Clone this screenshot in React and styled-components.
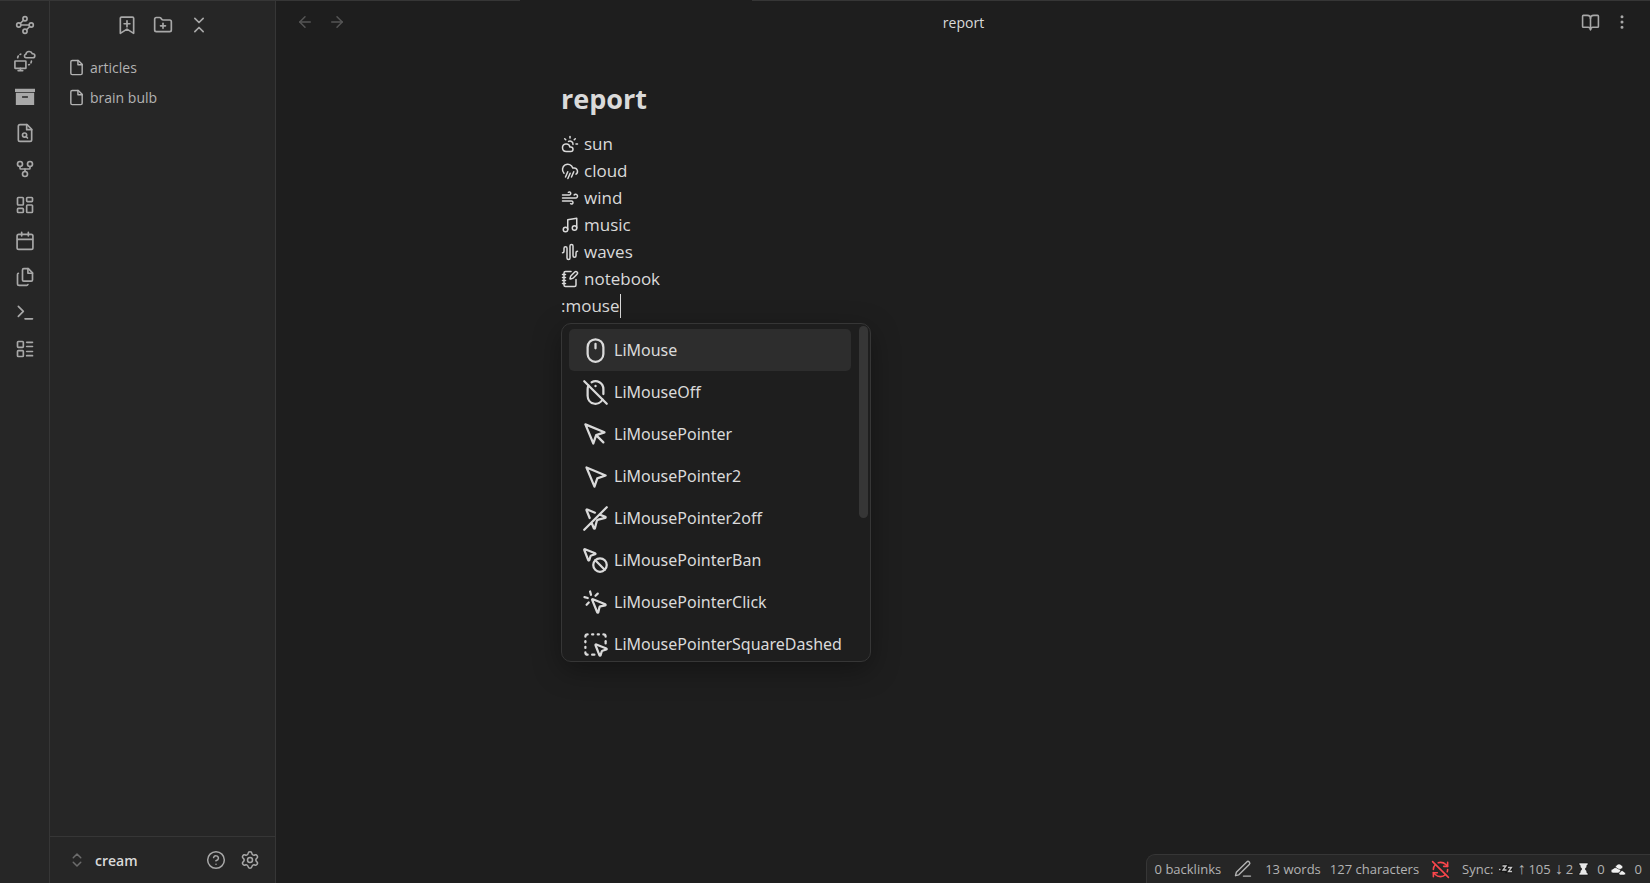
import React from "react";
import styled, { createGlobalStyle } from "styled-components";
import {
  Waypoints, GitFork, LayoutDashboard, LayoutList,
  FolderPlus, ChevronsDownUp, ChevronsUpDown, CircleHelp, Settings,
  ArrowLeft, ArrowRight, BookOpen, EllipsisVertical, CloudSun, CloudRainWind,
  Wind, Music, AudioWaveform, NotebookPen, Mouse, MouseOff,
  MousePointerBan, MousePointerClick, SquareDashedMousePointer, RefreshCwOff,
} from "lucide-react";

const Global = createGlobalStyle`
  *, *::before, *::after { box-sizing: border-box; }
  body {
    margin: 0;
    background: #1e1e1e;
    color: #dadada;
    font-family: "Open Sans", "Noto Sans", sans-serif;
    font-size: 14px;
  }
  button { font: inherit; color: inherit; background: none; border: 0; padding: 0; cursor: pointer; }
  h1, ul, p { margin: 0; padding: 0; list-style: none; }
  svg { display: block; flex: none; }
`;

const Shell = styled.div`
  display: grid;
  grid-template-columns: 50px 226px minmax(0, 1fr);
  height: 100vh;
  overflow: hidden;
`;

const Ribbon = styled.nav`
  display: flex;
  flex-direction: column;
  align-items: center;
  padding-top: 6px;
  background: #262626;
  border-top: 1px solid #363636;
  border-right: 1px solid #363636;
`;

const IconButton = styled.button`
  display: grid;
  place-items: center;
  width: ${(p) => p.$w || 36}px;
  height: 36px;
  color: ${(p) => (p.$dim ? "#555555" : "#a8a8a8")};
`;

const Sidebar = styled.aside`
  display: flex;
  flex-direction: column;
  background: #262626;
  border-top: 1px solid #363636;
  border-right: 1px solid #363636;
`;

const SidebarTools = styled.div`
  display: flex;
  justify-content: center;
  padding: 6px 0 9px;
`;

const FileList = styled.ul`
  flex: 1;
  padding: 0 14px;
`;

const FileLink = styled.a`
  display: flex;
  align-items: center;
  gap: 5px;
  height: 30px;
  padding-left: 4px;
  font-size: 14px;
  color: #b3b3b3;
  text-decoration: none;
`;

const VaultBar = styled.div`
  display: flex;
  align-items: center;
  height: 47px;
  padding: 0 8px 0 18px;
  border-top: 1px solid #363636;
`;

const VaultButton = styled.button`
  display: flex;
  flex: 1;
  align-items: center;
  gap: 9px;
  font-weight: 600;
  color: #dadada;
  svg { color: #6c6c6c; }
`;

const Main = styled.main`
  position: relative;
  display: flex;
  flex-direction: column;
  min-width: 0;
`;

const TabEdge = styled.div`
  display: grid;
  grid-template-columns: 244px 232px 1fr;
  height: 1px;
  span:nth-child(odd) { background: #363636; }
`;

const ViewHeader = styled.header`
  display: grid;
  grid-template-columns: 1fr auto 1fr;
  align-items: center;
  height: 42px;
  padding: 0 12px 0 13px;
`;

const HeaderSide = styled.div`
  display: flex;
  justify-content: ${(p) => (p.$end ? "flex-end" : "flex-start")};
`;

const Scroller = styled.div`
  flex: 1;
  padding: 36px 14px 0 0;
`;

const Note = styled.article`
  width: 100%;
  max-width: 790px;
  margin: 0 auto;
`;

const NoteTitle = styled.h1`
  margin-bottom: 11px;
  font-size: 27px;
  line-height: 40px;
  font-weight: 700;
`;

const Lines = styled.div`
  display: flex;
  flex-direction: column;
`;

const Line = styled.p`
  position: relative;
  display: flex;
  align-items: center;
  height: 27px;
  font-size: 17px;
  line-height: 27px;
  gap: 5px;
`;

const ActiveLine = styled(Line).attrs({ as: "div" })`
  gap: 0;
`;

const Caret = styled.span`
  width: 1px;
  height: 24px;
  background: #dadada;
`;

const Popup = styled.div`
  position: absolute;
  top: 31px;
  left: 0;
  z-index: 2;
  display: flex;
  justify-content: space-between;
  width: 310px;
  height: 339px;
  padding: 2px 2px 0 7px;
  overflow: hidden;
  background: #1e1e1e;
  border: 1px solid #363636;
  border-radius: 10px;
  box-shadow: 0 8px 28px rgba(0, 0, 0, 0.35);
`;

const Options = styled.div`
  display: flex;
  flex-direction: column;
  width: 282px;
  padding-top: 3px;
`;

const Option = styled.button`
  display: flex;
  flex: none;
  align-items: center;
  gap: 5px;
  height: 42px;
  padding: 0 13px;
  border-radius: 5px;
  font-family: "Noto Sans", "Open Sans", sans-serif;
  font-size: 16px;
  background: ${(p) => (p.$active ? "#2d2d2d" : "transparent")};
`;

const Thumb = styled.div`
  width: 9px;
  height: 192px;
  border-radius: 5px;
  background: #363636;
`;

const StatusBar = styled.footer`
  position: absolute;
  right: 0;
  bottom: 0;
  display: flex;
  align-items: center;
  height: 29px;
  padding: 0 8px;
  font-size: 13px;
  color: #b3b3b3;
  background: #262626;
  border: 1px solid #363636;
  border-width: 1px 0 0 1px;
  border-radius: 9px 0 0 0;
`;

const Status = styled.span`
  display: flex;
  align-items: center;
  margin-right: ${(p) => p.$gap || 0}px;
  color: ${(p) => (p.$alert ? "#fb464c" : "inherit")};
`;

const Arrow = styled.span`
  width: 10px;
  margin-right: 2px;
  font-family: "Liberation Sans", sans-serif;
  font-size: 16px;
  line-height: 16px;
  text-align: center;
`;

function Glyph({ size = 20, strokeWidth = 2, children }) {
  return (
    <svg width={size} height={size} viewBox="0 0 24 24" fill="none" stroke="currentColor"
      strokeWidth={strokeWidth} strokeLinecap="round" strokeLinejoin="round" aria-hidden="true">
      {children}
    </svg>
  );
}

const CloudSync = () => (
  <Glyph size={22} strokeWidth={1.8}>
    <path d="M13 8.500h7.500a2.200 2.200 0 0 0 0-4.400h-.5a3.700 3.700 0 0 0-7.100.5A2 2 0 0 0 13 8.500Z" />
    <rect x="1" y="12" width="12" height="8" rx=".5" />
    <path d="M7 20v2M4.500 22.500h5M4 8.500c.1-.8.300-1.300.7-1.900M6.600 4.900l.8-.4M19 12c0 .8-.2 1.400-.5 2M16.800 15.800l-.8.3" />
  </Glyph>
);
const ArchiveSolid = () => (
  <Glyph size={20}>
    <path stroke="none" fill="currentColor" d="M0 2h24v4H0zM1 7h22v14.500H1zM8.500 11v2h7v-2z" fillRule="evenodd" />
  </Glyph>
);
const FileQuery = () => (
  <Glyph>
    <path d="M14.500 2H6a2 2 0 0 0-2 2v16a2 2 0 0 0 2 2h12a2 2 0 0 0 2-2V7.500L14.500 2z" />
    <path d="M14 2v6h6" /><circle cx="11.500" cy="14.500" r="2.500" /><path d="M13.300 16.300 15 18" />
  </Glyph>
);
const CalendarBlank = () => (
  <Glyph>
    <rect x="2.500" y="4" width="19" height="18" rx="2" /><path d="M16 1.500V6M8 1.500V6M3 10h18" />
  </Glyph>
);
const FileStack = () => (
  <Glyph>
    <path d="M16 2h-5.500A1.500 1.500 0 0 0 9 3.500v12a1.500 1.500 0 0 0 1.500 1.500h9a1.500 1.500 0 0 0 1.500-1.500V7z" />
    <path d="M15.500 2v5.500H21M4 7.500a1.500 1.500 0 0 0-1 1.400V20a2 2 0 0 0 2 2h9a1.800 1.800 0 0 0 1.500-1" />
  </Glyph>
);
const Prompt = () => <Glyph><path d="m4 16 6-6-6-6M12 19h9" /></Glyph>;
const BookmarkAdd = () => (
  <Glyph><path d="m20 22-8-5-8 5V4a1.500 1.500 0 0 1 1.500-1.500h13A1.500 1.500 0 0 1 20 4zM12 7v7M8.500 10.500h7" /></Glyph>
);
const Page = () => (
  <Glyph size={17}>
    <path d="M14.500 2H6a2 2 0 0 0-2 2v16a2 2 0 0 0 2 2h12a2 2 0 0 0 2-2V7.500L14.500 2z" /><path d="M14 2v6h6" />
  </Glyph>
);
const PenLine = () => (
  <Glyph size={20} strokeWidth={1.7}><path d="M12.500 20.500H21M16.500 3.500a2.100 2.100 0 0 1 3 3L7 19l-4 1 1-4z" /></Glyph>
);
const Pointer = ({ size }) => (
  <Glyph size={size}><path d="m3 3 7.070 16.970 2.510-7.390 7.390-2.510L3 3zM13 13l6 6" /></Glyph>
);
const PointerTwo = ({ size }) => (
  <Glyph size={size}><path d="m4 4 7.070 17 2.510-7.390L21 11.070z" /></Glyph>
);
const PointerTwoOff = ({ size }) => (
  <Glyph size={size}>
    <path d="m15.550 8.450 5.138 2.087a.5.5 0 0 1-.063.947l-6.124 1.580a2 2 0 0 0-1.438 1.435l-1.579 6.126a.5.5 0 0 1-.947.063L8.450 15.551M22 2 2 22M6.816 11.528l-2.779-6.840a.495.495 0 0 1 .651-.651l6.840 2.779" />
  </Glyph>
);

const Sleep = () => (
  <svg width="15" height="12" viewBox="0 0 15 12" fill="none" aria-hidden="true">
    <g stroke="#121212" strokeWidth="3.500"><path d="M1 6.500h2M4.500 3h3.500L5 7h3.500M10 4.500h4l-3.500 4H14" /></g>
    <g stroke="#c8c8c8" strokeWidth="1.300"><path d="M1 6.500h1.500M4.500 3h3.500L5 7h3.500M10 4.500h3.500l-3 4H14" /></g>
  </svg>
);
const Hourglass = () => (
  <svg width="11" height="14" viewBox="0 0 11 14" aria-hidden="true">
    <path d="M1 1h9v2H9c0 2-1 3-2 4 1 1 2 2 2 4h1v2H1v-2h1c0-2 1-3 2-4C3 6 2 5 2 3H1z" fill="#e8e8e8" stroke="#111" strokeWidth=".6" />
  </svg>
);
const Clouds = () => (
  <svg width="15" height="13" viewBox="0 0 15 13" stroke="#111" strokeWidth=".5" fill="#f0f0f0" aria-hidden="true">
    <path d="M5 5a2 2 0 0 1 1-3 2.500 2.500 0 0 1 4 0 2 2 0 0 1 1 3.500L8 7z" />
    <path d="M2 10a2 2 0 0 1 0-4 3 3 0 0 1 5 0 2 2 0 0 1 1 4zM9.500 12a1.700 1.700 0 0 1 0-3.400 2 2 0 0 1 3.500.4 1.500 1.500 0 0 1 0 3z" />
  </svg>
);

const ribbon = [
  ["Graph", Waypoints], ["Remote sync", CloudSync], ["Archive", ArchiveSolid],
  ["Search in file", FileQuery], ["Fork", GitFork], ["Canvas", LayoutDashboard],
  ["Daily note", CalendarBlank], ["Templates", FileStack], ["Command palette", Prompt],
  ["Layout", LayoutList],
];
const tools = [["Bookmark", BookmarkAdd], ["New folder", FolderPlus], ["Collapse all", ChevronsDownUp]];
const files = ["articles", "brain bulb"];
const lines = [
  ["sun", CloudSun], ["cloud", CloudRainWind], ["wind", Wind],
  ["music", Music], ["waves", AudioWaveform], ["notebook", NotebookPen],
];
const options = [
  ["LiMouse", Mouse], ["LiMouseOff", MouseOff], ["LiMousePointer", Pointer],
  ["LiMousePointer2", PointerTwo], ["LiMousePointer2off", PointerTwoOff],
  ["LiMousePointerBan", MousePointerBan], ["LiMousePointerClick", MousePointerClick],
  ["LiMousePointerSquareDashed", SquareDashedMousePointer],
];

export default function App() {
  return (
    <Shell>
      <Global />
      <Ribbon>
        {ribbon.map(([label, Icon]) => (
          <IconButton key={label} aria-label={label}><Icon size={20} /></IconButton>
        ))}
      </Ribbon>
      <Sidebar>
        <SidebarTools>
          {tools.map(([label, Icon]) => (
            <IconButton key={label} aria-label={label}><Icon size={20} /></IconButton>
          ))}
        </SidebarTools>
        <FileList>
          {files.map((name) => (
            <li key={name}><FileLink href="#"><Page />{name}</FileLink></li>
          ))}
        </FileList>
        <VaultBar>
          <VaultButton><ChevronsUpDown size={18} />cream</VaultButton>
          <IconButton $w={34} aria-label="Help"><CircleHelp size={20} strokeWidth={1.8} /></IconButton>
          <IconButton $w={34} aria-label="Settings"><Settings size={20} strokeWidth={1.8} /></IconButton>
        </VaultBar>
      </Sidebar>
      <Main>
        <TabEdge><span /><span /><span /></TabEdge>
        <ViewHeader>
          <HeaderSide>
            <IconButton $w={32} $dim aria-label="Back"><ArrowLeft size={18} /></IconButton>
            <IconButton $w={32} $dim aria-label="Forward"><ArrowRight size={18} /></IconButton>
          </HeaderSide>
          <span>report</span>
          <HeaderSide $end>
            <IconButton $w={32} aria-label="Reading view"><BookOpen size={19} /></IconButton>
            <IconButton $w={32} aria-label="More options"><EllipsisVertical size={18} /></IconButton>
          </HeaderSide>
        </ViewHeader>
        <Scroller>
          <Note>
            <NoteTitle>report</NoteTitle>
            <Lines>
              {lines.map(([word, Icon]) => (
                <Line key={word}><Icon size={18} />{word}</Line>
              ))}
              <ActiveLine>
                :mouse<Caret />
                <Popup>
                  <Options role="listbox" aria-label="Icons">
                    {options.map(([name, Icon], i) => (
                      <Option key={name} role="option" aria-selected={i === 0} $active={i === 0}>
                        <Icon size={27} />{name}
                      </Option>
                    ))}
                  </Options>
                  <Thumb />
                </Popup>
              </ActiveLine>
            </Lines>
          </Note>
        </Scroller>
        <StatusBar>
          <Status $gap={12}>0 backlinks</Status>
          <Status $gap={12}><PenLine /></Status>
          <Status $gap={9}>13 words</Status>
          <Status $gap={12}>127 characters</Status>
          <Status $gap={12} $alert><RefreshCwOff size={19} /></Status>
          <Status $gap={5}>Sync:</Status>
          <Status $gap={3}><Sleep /></Status>
          <Status $gap={3}><Arrow>↑</Arrow>105</Status>
          <Status $gap={5}><Arrow>↓</Arrow>2</Status>
          <Status $gap={8}><Hourglass /></Status>
          <Status $gap={6}>0</Status>
          <Status $gap={9}><Clouds /></Status>
          <Status>0</Status>
        </StatusBar>
      </Main>
    </Shell>
  );
}
